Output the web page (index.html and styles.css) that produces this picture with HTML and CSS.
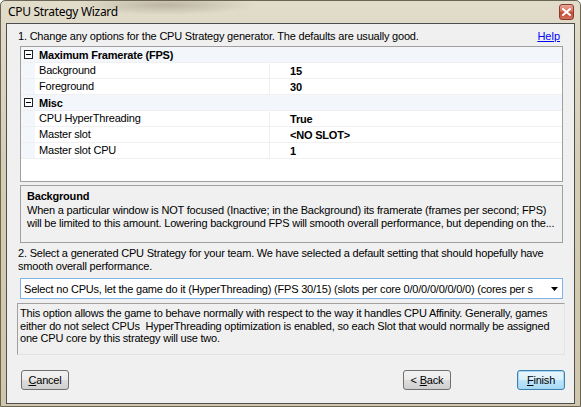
FILE: index.html
```html
<!DOCTYPE html>
<html>
<head>
    <title>CPU Strategy Wizard</title>
    <link rel="stylesheet" href="styles.css">
</head>
<body>
<div class="window">
    <div class="titlebar">
        <span class="title">CPU Strategy Wizard</span>
        <span class="close">
            <svg width="9" height="8" viewBox="0 0 9 8"><path d="M1 1 L8 7 M8 1 L1 7" stroke="#fff" stroke-width="2" stroke-linecap="square"/></svg>
        </span>
    </div>
    <div class="client">
        <div class="intro">
            <span>1. Change any options for the CPU Strategy generator. The defaults are usually good.</span>
            <a href="#" class="help-link">Help</a>
        </div>

        <div class="grid">
            <div class="row cat">
                <svg class="toggle" width="9" height="9" viewBox="0 0 9 9"><rect x="0.5" y="0.5" width="8" height="8" fill="#fff" stroke="#222"/><path d="M2 4.5 H7" stroke="#000"/></svg>
                <span class="cat-name">Maximum Framerate (FPS)</span>
            </div>
            <div class="row prop"><span class="name">Background</span><span class="value">15</span></div>
            <div class="row prop"><span class="name">Foreground</span><span class="value">30</span></div>
            <div class="row cat">
                <svg class="toggle" width="9" height="9" viewBox="0 0 9 9"><rect x="0.5" y="0.5" width="8" height="8" fill="#fff" stroke="#222"/><path d="M2 4.5 H7" stroke="#000"/></svg>
                <span class="cat-name">Misc</span>
            </div>
            <div class="row prop"><span class="name">CPU HyperThreading</span><span class="value">True</span></div>
            <div class="row prop"><span class="name">Master slot</span><span class="value">&lt;NO SLOT&gt;</span></div>
            <div class="row prop"><span class="name">Master slot CPU</span><span class="value">1</span></div>
        </div>

        <div class="helpbox">
            <div class="help-title">Background</div>
            <div class="help-text">When a particular window is NOT focused (Inactive; in the Background) its framerate (frames per second; FPS)<br>will be limited to this amount. Lowering background FPS will smooth overall performance, but depending on the...</div>
        </div>

        <div class="step2">2. Select a generated CPU Strategy for your team. We have selected a default setting that should hopefully have<br>smooth overall performance.</div>

        <div class="combo">
            <span class="combo-text">Select no CPUs, let the game do it (HyperThreading) (FPS 30/15) (slots per core 0/0/0/0/0/0/0/0) (cores per s</span>
            <span class="combo-arrow"><svg width="7" height="4" viewBox="0 0 7 4"><path d="M0 0 H7 L3.5 4 Z" fill="#000"/></svg></span>
        </div>

        <div class="desc">This option allows the game to behave normally with respect to the way it handles CPU Affinity. Generally, games<br>either do not select CPUs&nbsp; HyperThreading optimization is enabled, so each Slot that would normally be assigned<br>one CPU core by this strategy will use two.</div>

        <div class="buttons">
            <button class="btn"><u>C</u>ancel</button>
            <span class="spacer"></span>
            <button class="btn">&lt; <u>B</u>ack</button>
            <button class="btn default"><u>F</u>inish</button>
        </div>
    </div>
</div>
</body>
</html>
```

FILE: styles.css
```css
body { margin: 0; background: #fff; }
.window { width: 581px; height: 407px; box-sizing: border-box; border: 1px solid #6b6556; border-radius: 5px 5px 0 0; background: linear-gradient(180deg, #e2dccb 0%, #d6cdb5 40%, #cfc6ad 100%); padding: 0 5px 3px 5px; display: flex; flex-direction: column; font-family: "Liberation Sans", Arial, sans-serif; font-size: 11px; letter-spacing: -0.2px; color: #000; overflow: hidden; }
.window > * { flex-shrink: 0; }
.titlebar { height: 22px; display: flex; align-items: center; justify-content: space-between; background: radial-gradient(ellipse 90px 10px at 160px 4px, rgba(120,110,90,0.35), rgba(120,110,90,0)); }
.title { font-family: "Noto Sans", "Open Sans", sans-serif; font-size: 12px; letter-spacing: -0.3px; color: #000; padding-left: 2px; margin-top: -2px; }
.close { width: 15px; height: 16px; box-sizing: border-box; border: 1px solid #8a3b2e; border-radius: 3px; background: linear-gradient(180deg, #e9a99b 0%, #d7705a 45%, #c04a32 55%, #d2715a 100%); display: flex; align-items: center; justify-content: center; margin-top: -1px; margin-right: 1px; }
.client { width: 569px; height: 381px; box-sizing: border-box; border: 1px solid #4e4e4e; background: #f0f0f0; display: flex; flex-direction: column; padding: 0 10px 0 13px; overflow: hidden; }
.client > * { flex-shrink: 0; min-width: 0; }
.intro { display: flex; justify-content: space-between; margin: 6px 4px 0 -2px; height: 16px; }
.help-link { color: #0000ff; text-decoration: underline; letter-spacing: 0; }
.grid { width: 543px; height: 136px; box-sizing: border-box; border: 1px solid #a0a0a0; background: #fff; overflow: hidden; }
.row { height: 16px; box-sizing: border-box; display: flex; align-items: center; border-bottom: 1px solid #f0f0f0; }
.cat { background: #f3f6fb; }
.toggle { margin: 0 6px 0 3px; flex-shrink: 0; }
.cat-name { font-weight: bold; }
.prop { background: linear-gradient(90deg, #f3f6fb 0, #f3f6fb 14px, #fff 14px); }
.name { width: 249px; padding-left: 18px; box-sizing: border-box; border-right: 1px solid #f0f0f0; height: 15px; line-height: 15px; }
.value { font-weight: bold; padding-left: 20px; }
.helpbox { width: 543px; margin-top: 3px; height: 58px; box-sizing: border-box; border: 1px solid #a0a0a0; padding: 3px 6px; overflow: hidden; }
.help-title { font-weight: bold; line-height: 14px; }
.help-text { line-height: 13px; margin-top: 1px; white-space: nowrap; }
.step2 { margin: 4px 0 0 -2px; line-height: 13px; white-space: nowrap; }
.combo { width: 543px; margin-top: 5px; height: 21px; box-sizing: border-box; border: 1px solid #7eb4ea; background: #fff; display: flex; align-items: center; padding-left: 3px; }
.combo-text { flex: 1; white-space: nowrap; overflow: hidden; }
.combo-arrow { width: 15px; display: flex; justify-content: center; }
.desc { width: 548px; margin: 4px 0 0 -3px; height: 52px; box-sizing: border-box; border: 1px solid; border-color: #a0a0a0 #e3e3e3 #e3e3e3 #a0a0a0; padding: 3px 2px; line-height: 12.5px; white-space: nowrap; overflow: hidden; }
.buttons { width: 545px; margin-top: 15px; display: flex; gap: 66px; }
.spacer { flex: 1; }
.btn { width: 48px; height: 20px; box-sizing: border-box; border: 1px solid #707070; border-radius: 3px; background: linear-gradient(180deg, #f2f2f2 0%, #ebebeb 50%, #dddddd 51%, #cfcfcf 100%); font-family: "Liberation Sans", Arial, sans-serif; font-size: 11px; letter-spacing: -0.2px; padding: 0; color: #000; }
.buttons .btn:first-child { margin-left: 1px; }
.default { border-color: #3c7fb1; box-shadow: inset 0 0 0 1px #a6d7f2; background: linear-gradient(180deg, #eaf6fd 0%, #d9f0fc 50%, #bee6fd 51%, #a7d9f5 100%); }
```
